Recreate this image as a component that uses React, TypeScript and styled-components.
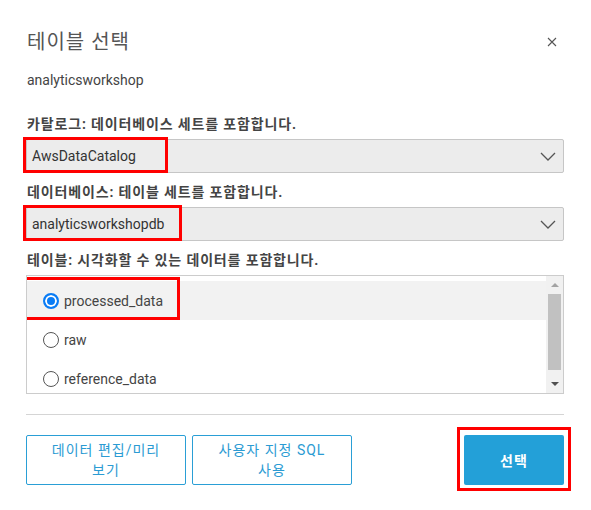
import styled, { createGlobalStyle } from 'styled-components';

const GlobalStyle = createGlobalStyle`
  body {
    margin: 0;
    background: #fff;
    font-family: Roboto, "Noto Sans CJK KR", sans-serif;
    color: #444;
  }
`;

const tables = ['processed_data', 'raw', 'reference_data'];

const Chevron = () => (
  <svg width="16" height="9" viewBox="0 0 16 9">
    <path d="M1 1 L8 8 L15 1" fill="none" stroke="#555" strokeWidth="1.3" />
  </svg>
);

const App = () => {
  const selected = 'processed_data';

  return (
    <>
      <GlobalStyle />
      <Modal>
        <Header>
          <Title>테이블 선택</Title>
          <CloseButton aria-label="닫기">
            <svg width="10" height="10" viewBox="0 0 10 10">
              <path d="M1 1 L9 9 M9 1 L1 9" stroke="#555" strokeWidth="1.1" />
            </svg>
          </CloseButton>
        </Header>
        <Subtitle>analyticsworkshop</Subtitle>

        <FieldLabel $top={23}>카탈로그: 데이터베이스 세트를 포함합니다.</FieldLabel>
        <Select>
          <SelectValue>AwsDataCatalog</SelectValue>
          <Chevron />
          <RedBox $left={-4} $top={-3} $width={145} $height={36} />
        </Select>

        <FieldLabel $top={8}>데이터베이스: 테이블 세트를 포함합니다.</FieldLabel>
        <Select>
          <SelectValue>analyticsworkshopdb</SelectValue>
          <Chevron />
          <RedBox $left={-4} $top={-3} $width={159} $height={36} />
        </Select>

        <FieldLabel $top={8}>테이블: 시각화할 수 있는 데이터를 포함합니다.</FieldLabel>
        <ListBox>
          <Rows>
            {tables.map((t) => (
              <Row key={t} $active={t === selected}>
                <Radio $checked={t === selected} />
                <RowText>{t}</RowText>
                {t === selected && (
                  <RedBox $left={-3} $top={-4} $width={156} $height={43} />
                )}
              </Row>
            ))}
          </Rows>
          <ScrollBar>
            <Arrow $up />
            <Thumb />
            <Arrow />
          </ScrollBar>
        </ListBox>

        <Divider />

        <Footer>
          <SecondaryGroup>
            <OutlineButton>
              데이터 편집/미리
              <br />
              보기
            </OutlineButton>
            <OutlineButton>
              사용자 지정 SQL
              <br />
              사용
            </OutlineButton>
          </SecondaryGroup>
          <PrimaryWrap>
            <PrimaryButton>선택</PrimaryButton>
            <RedBox $left={-7} $top={-8} $width={114} $height={64} />
          </PrimaryWrap>
        </Footer>
      </Modal>
    </>
  );
};

export default App;

const Modal = styled.div`
  width: 591px;
  height: 510px;
  box-sizing: border-box;
  padding: 28px 27px 0 26px;
  background: #fff;
`;

const Header = styled.div`
  display: flex;
  align-items: center;
  justify-content: space-between;
  height: 28px;
`;

const Title = styled.h2`
  margin: 0 0 0 1px;
  font-size: 20px;
  font-weight: 400;
  line-height: 28px;
  letter-spacing: 1px;
  color: #555;
`;

const CloseButton = styled.button`
  border: 0;
  background: none;
  padding: 0;
  margin-right: 7px;
  width: 10px;
  height: 10px;
  display: flex;
  cursor: pointer;
`;

const Subtitle = styled.div`
  margin: 14px 0 0 1px;
  font-size: 14px;
  line-height: 20px;
  color: #444;
`;

const FieldLabel = styled.div<{ $top: number }>`
  margin: ${(p) => p.$top + 1}px 0 5px 1px;
  font-size: 14px;
  line-height: 20px;
  font-weight: 700;
  letter-spacing: 0.85px;
  color: #444;
`;

const Select = styled.div`
  position: relative;
  height: 34px;
  box-sizing: border-box;
  border: 1px solid #c6c6c6;
  border-radius: 2px;
  background: #ececec;
  display: flex;
  align-items: center;
  justify-content: space-between;
  padding: 0 7px 0 5px;
`;

const SelectValue = styled.span`
  font-size: 14px;
  color: #333;
`;

const RedBox = styled.span<{ $left: number; $top: number; $width: number; $height: number }>`
  position: absolute;
  left: ${(p) => p.$left}px;
  top: ${(p) => p.$top}px;
  width: ${(p) => p.$width}px;
  height: ${(p) => p.$height}px;
  box-sizing: border-box;
  border: 3px solid #f00;
  pointer-events: none;
`;

const ListBox = styled.div`
  height: 119px;
  box-sizing: border-box;
  border: 1px solid #ccc;
  display: flex;
  background: #fff;
`;

const Rows = styled.div`
  flex: 1;
  padding-top: 5px;
  overflow: hidden;
`;

const Row = styled.div<{ $active: boolean }>`
  position: relative;
  height: 39px;
  display: flex;
  align-items: center;
  padding-left: 16px;
  background: ${(p) => (p.$active ? '#f2f2f2' : 'transparent')};
`;

const Radio = styled.span<{ $checked: boolean }>`
  width: 16px;
  height: 16px;
  box-sizing: border-box;
  border-radius: 50%;
  border: ${(p) => (p.$checked ? '2px solid #0a7cf5' : '1px solid #555')};
  background: ${(p) => (p.$checked ? '#0a7cf5' : '#fff')};
  box-shadow: ${(p) => (p.$checked ? 'inset 0 0 0 2px #fff' : 'none')};
  margin-right: 5px;
  flex: none;
`;

const RowText = styled.span`
  font-size: 14px;
  color: #444;
`;

const ScrollBar = styled.div`
  width: 17px;
  background: #f1f1f1;
  display: flex;
  flex-direction: column;
  align-items: center;
`;

const Arrow = styled.span<{ $up?: boolean }>`
  width: 0;
  height: 0;
  margin: 7px 0;
  border-left: 4px solid transparent;
  border-right: 4px solid transparent;
  ${(p) =>
    p.$up
      ? 'border-bottom: 4px solid #a3a3a3;'
      : 'border-top: 4px solid #505050;'}
`;

const Thumb = styled.span`
  width: 13px;
  height: 76px;
  background: #c1c1c1;
  margin-bottom: auto;
`;

const Divider = styled.hr`
  margin: 20px 0 0;
  border: 0;
  height: 1px;
  background: #d5d5d5;
`;

const Footer = styled.div`
  display: flex;
  justify-content: space-between;
  align-items: flex-start;
  margin-top: 20px;
`;

const SecondaryGroup = styled.div`
  display: flex;
  gap: 6px;
`;

const OutlineButton = styled.button`
  width: 160px;
  height: 50px;
  box-sizing: border-box;
  border: 1px solid #2a9fd6;
  border-radius: 2px;
  background: #fff;
  color: #2b9bd3;
  font-family: inherit;
  font-size: 14px;
  line-height: 20px;
  letter-spacing: 1px;
  padding: 0 8px;
  cursor: pointer;
`;

const PrimaryWrap = styled.div`
  position: relative;
`;

const PrimaryButton = styled.button`
  width: 100px;
  height: 50px;
  border: 0;
  border-radius: 2px;
  background: #23a0d8;
  color: #fff;
  font-family: inherit;
  font-size: 14px;
  font-weight: 700;
  letter-spacing: 1px;
  cursor: pointer;
`;
